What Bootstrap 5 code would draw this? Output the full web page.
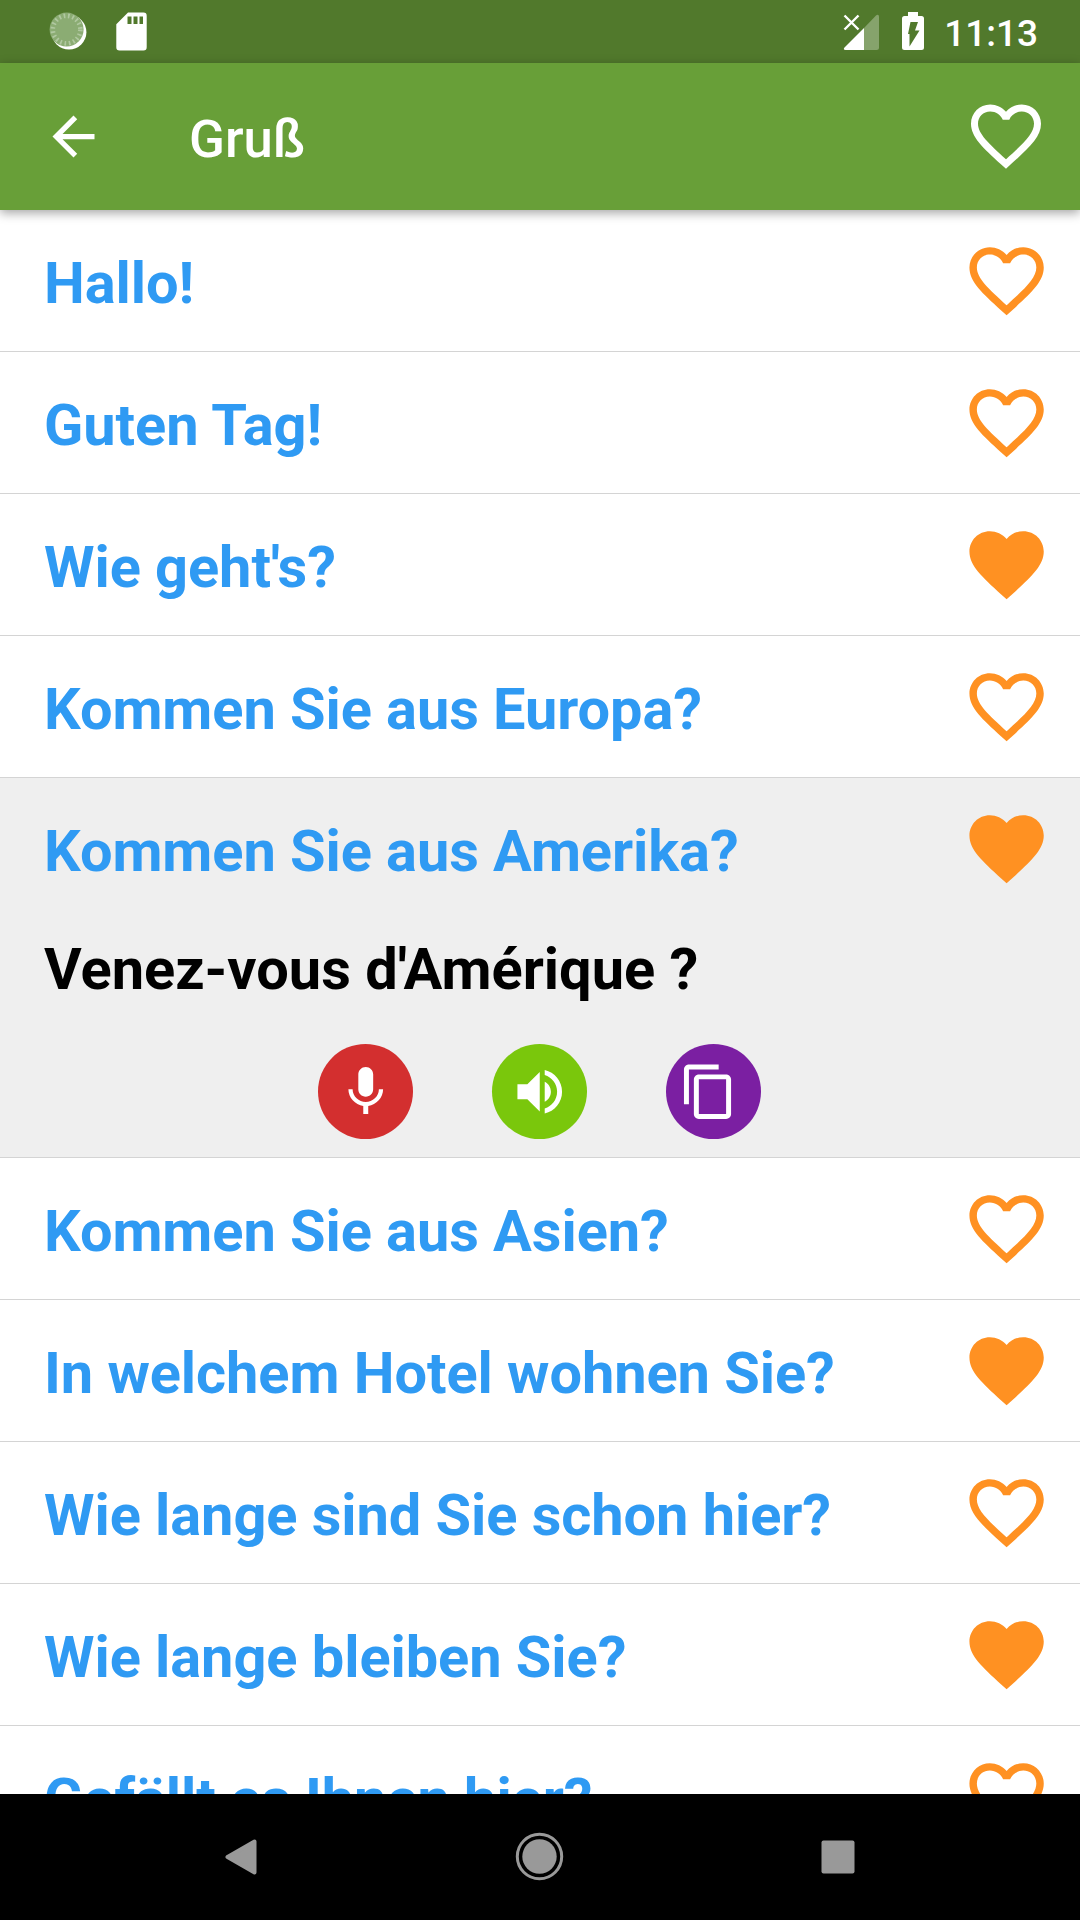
<!DOCTYPE html>
<html lang="de">
<head>
<meta charset="utf-8">
<meta name="viewport" content="width=device-width, initial-scale=1">
<title>Gruß</title>
<link rel="stylesheet" href="https://cdn.jsdelivr.net/npm/bootstrap@5.3.0/dist/css/bootstrap.min.css">
<style>
  body { font-family: Roboto, "Noto Sans", sans-serif; }
  svg { display: block; flex: none; fill: currentColor; }
  .app-screen { height: 1920px; }
  .status-strip { height: 63px; background: #51792c; padding: 0 42px 0 49px; }
  .status-clock { font-size: 37px; font-weight: 500; line-height: 60px; padding-top: 4px; }
  .app-header { height: 147px; background: #689f38; padding: 0 32px 0 42px; box-shadow: 0 3px 10px rgba(0,0,0,.36); z-index: 2; }
  .app-title { font-size: 52.7px; font-weight: 500; line-height: 62px; margin-left: 84px; padding-top: 4px; }
  .header-heart { padding-bottom: 2px; }
  .phrase-item { border-bottom: 1px solid #d4d4d4; }
  .phrase-line { height: 141px; padding: 0 29px 0 44px; }
  .phrase-text { font-size: 57.75px; font-weight: 700; line-height: 68px; white-space: nowrap; }
  .phrase-line .phrase-text { color: #2f9af3; padding-top: 4px; letter-spacing: -.07px; }
  .phrase-line svg { color: #ff9122; width: 89.2px; height: 89.2px; }
  .phrase-open { background: #efefef; }
  .phrase-answer { padding: 16px 44px 0; }
  .phrase-actions { gap: 79px; margin-top: 41px; padding: 0 2px 18px 0; }
  .round-action { width: 95px; height: 95px; padding-left: 1px; }
  .round-action svg { width: 59.5px; height: 59.5px; }
  .action-record { background: #d32f2f; }
  .action-listen { background: #7ac70c; }
  .action-copy { background: #7b1fa2; padding-right: 10px; }
  .nav-strip { height: 126px; background: #000; color: #999; }
</style>
<script src="https://cdn.jsdelivr.net/npm/bootstrap@5.3.0/dist/js/bootstrap.bundle.min.js"></script>
</head>
<body class="bg-white">
<svg width="0" height="0" class="position-absolute" aria-hidden="true">
  <symbol id="heart-line" viewBox="0 0 24 24"><path d="M16.5 3c-1.74 0-3.41.81-4.5 2.09C10.91 3.81 9.24 3 7.5 3 4.42 3 2 5.42 2 8.5c0 3.78 3.4 6.86 8.55 11.54L12 21.35l1.45-1.32C18.6 15.36 22 12.28 22 8.5 22 5.42 19.58 3 16.5 3zm-4.4 15.55l-.1.1-.1-.1C7.14 14.24 4 11.39 4 8.5 4 6.5 5.5 5 7.5 5c1.54 0 3.04.99 3.57 2.36h1.87C13.46 5.99 14.96 5 16.5 5c2 0 3.5 1.5 3.5 3.5 0 2.89-3.14 5.74-7.9 10.05z"/></symbol>
  <symbol id="heart-full" viewBox="0 0 24 24"><path d="M12 21.35l-1.45-1.32C5.4 15.36 2 12.28 2 8.5 2 5.42 4.42 3 7.5 3c1.74 0 3.41.81 4.5 2.09C13.09 3.81 14.76 3 16.5 3 19.58 3 22 5.42 22 8.5c0 3.78-3.4 6.86-8.55 11.54L12 21.35z"/></symbol>
</svg>
<div class="app-screen d-flex flex-column overflow-hidden">
  <div class="status-strip d-flex align-items-center justify-content-between text-white flex-shrink-0">
    <svg width="102" height="63" viewBox="49 0 102 63">
      <circle cx="69" cy="32.2" r="17.4"/>
      <circle cx="66.6" cy="29.6" r="17" fill="#8bac73"/>
      <circle cx="66.6" cy="29.6" r="13.8" fill="none" stroke="#b0c8a0" stroke-width="4.6" stroke-dasharray="1.7 2.7"/>
      <path fill-rule="evenodd" d="M128 12.5h15.500q3.200 0 3.200 3.200v31.500q0 3.200-3.200 3.200h-24q-3.200 0-3.200-3.200v-23zM127.500 16.500v7.500h4v-7.500zm6 0v7.500h4v-7.500zm6 0v7.500h3.500v-7.500z"/>
    </svg>
    <div class="d-flex align-items-center">
      <svg width="101" height="63" viewBox="843 0 101 63">
        <path d="M864 28v22h12.500q2.500 0 2.500-2.500V17c0-2.500-1.500-3-3-1.500z" fill="#86a36c"/>
        <path d="M864 28v22h-18.500c-2 0-2-1.500-1-2.500z"/>
        <path d="M844.500 15.500l14 14m0-14l-14 14" stroke="#fff" stroke-width="2.4"/>
        <path d="M908 12h10v4h3.500q2.500 0 2.500 2.500v29q0 2.500-2.500 2.500h-17q-2.500 0-2.500-2.500v-29q0-2.500 2.500-2.500h3.500z"/>
        <path d="M910.500 22h7.500l-3 8.500h4.500l-10 16v-12.500h-1.500z" fill="#51792c"/>
      </svg>
      <span class="status-clock">11:13</span>
    </div>
  </div>
  <header class="app-header d-flex align-items-center text-white flex-shrink-0 position-relative">
    <svg width="63" height="63" viewBox="0 0 24 24"><path d="M20 11H7.830l5.590-5.590L12 4l-8 8 8 8 1.410-1.410L7.830 13H20v-2z"/></svg>
    <h1 class="app-title mb-0">Gruß</h1>
    <div class="header-heart ms-auto"><svg width="84" height="84"><use href="#heart-line"/></svg></div>
  </header>
  <main class="flex-grow-1 overflow-hidden">
    <div class="phrase-item"><div class="phrase-line d-flex align-items-center justify-content-between"><span class="phrase-text">Hallo!</span><svg><use href="#heart-line"/></svg></div></div>
    <div class="phrase-item"><div class="phrase-line d-flex align-items-center justify-content-between"><span class="phrase-text">Guten Tag!</span><svg><use href="#heart-line"/></svg></div></div>
    <div class="phrase-item"><div class="phrase-line d-flex align-items-center justify-content-between"><span class="phrase-text">Wie geht's?</span><svg><use href="#heart-full"/></svg></div></div>
    <div class="phrase-item"><div class="phrase-line d-flex align-items-center justify-content-between"><span class="phrase-text">Kommen Sie aus Europa?</span><svg><use href="#heart-line"/></svg></div></div>
    <div class="phrase-item phrase-open">
      <div class="phrase-line d-flex align-items-center justify-content-between"><span class="phrase-text">Kommen Sie aus Amerika?</span><svg><use href="#heart-full"/></svg></div>
      <div class="phrase-answer phrase-text text-black">Venez-vous d'Amérique ?</div>
      <div class="phrase-actions d-flex justify-content-center">
        <div class="round-action action-record rounded-circle d-flex align-items-center justify-content-center text-white"><svg viewBox="0 0 24 24"><path d="M12 14c1.660 0 2.990-1.340 2.990-3L15 5c0-1.660-1.340-3-3-3S9 3.340 9 5v6c0 1.660 1.340 3 3 3zm5.300-3c0 3-2.540 5.100-5.300 5.100S6.700 14 6.700 11H5c0 3.410 2.720 6.230 6 6.720V21h2v-3.280c3.280-.48 6-3.300 6-6.720h-1.700z"/></svg></div>
        <div class="round-action action-listen rounded-circle d-flex align-items-center justify-content-center text-white"><svg viewBox="0 0 24 24"><path d="M3 9v6h4l5 5V4L7 9H3zm13.500 3c0-1.770-1.020-3.290-2.500-4.030v8.050c1.480-.73 2.500-2.250 2.500-4.020zM14 3.230v2.060c2.890.86 5 3.540 5 6.710s-2.110 5.850-5 6.710v2.060c4.010-.91 7-4.490 7-8.770s-2.990-7.860-7-8.770z"/></svg></div>
        <div class="round-action action-copy rounded-circle d-flex align-items-center justify-content-center text-white"><svg viewBox="0 0 24 24"><path d="M16 1H4c-1.100 0-2 .9-2 2v14h2V3h12V1zm3 4H8c-1.100 0-2 .9-2 2v14c0 1.100.9 2 2 2h11c1.100 0 2-.9 2-2V7c0-1.100-.9-2-2-2zm0 16H8V7h11v14z"/></svg></div>
      </div>
    </div>
    <div class="phrase-item"><div class="phrase-line d-flex align-items-center justify-content-between"><span class="phrase-text">Kommen Sie aus Asien?</span><svg><use href="#heart-line"/></svg></div></div>
    <div class="phrase-item"><div class="phrase-line d-flex align-items-center justify-content-between"><span class="phrase-text">In welchem Hotel wohnen Sie?</span><svg><use href="#heart-full"/></svg></div></div>
    <div class="phrase-item"><div class="phrase-line d-flex align-items-center justify-content-between"><span class="phrase-text">Wie lange sind Sie schon hier?</span><svg><use href="#heart-line"/></svg></div></div>
    <div class="phrase-item"><div class="phrase-line d-flex align-items-center justify-content-between"><span class="phrase-text">Wie lange bleiben Sie?</span><svg><use href="#heart-full"/></svg></div></div>
    <div class="phrase-item"><div class="phrase-line d-flex align-items-center justify-content-between"><span class="phrase-text">Gefällt es Ihnen hier?</span><svg><use href="#heart-line"/></svg></div></div>
  </main>
  <nav class="nav-strip flex-shrink-0">
    <svg width="1080" height="126" viewBox="0 0 1080 126">
      <path d="M227.500 63l27-15.500v31z" stroke="#999" stroke-width="4" stroke-linejoin="round"/>
      <circle cx="539.500" cy="62.500" r="22.200" fill="none" stroke="#999" stroke-width="3"/>
      <circle cx="539.500" cy="62.500" r="17.200"/>
      <rect x="821.500" y="46.500" width="33" height="33" rx="2"/>
    </svg>
  </nav>
</div>
</body>
</html>
